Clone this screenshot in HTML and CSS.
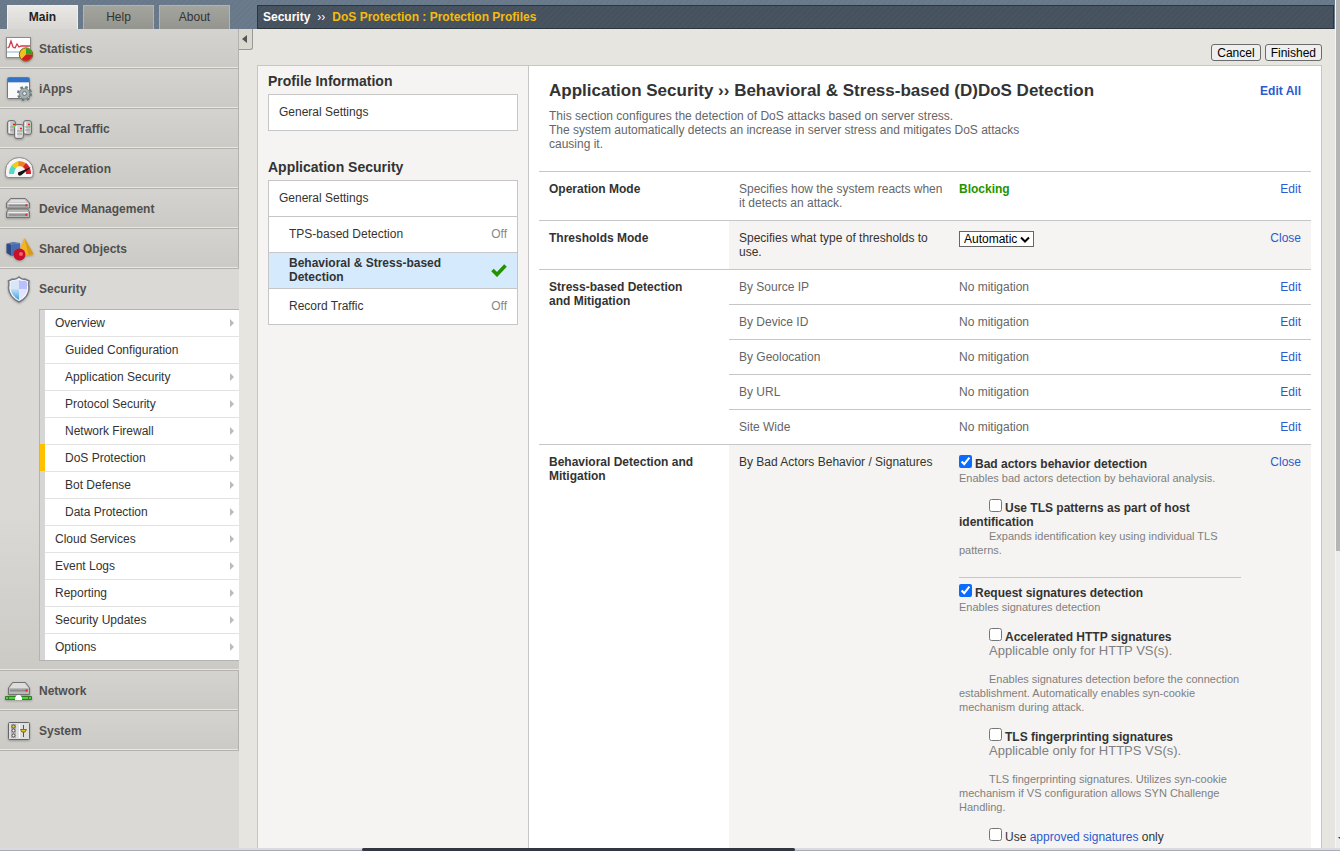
FILE: index.html
```html
<!DOCTYPE html>
<html lang="en">
<head>
<meta charset="utf-8">
<title>DoS Protection : Protection Profiles</title>
<link rel="stylesheet" href="styles.css">
</head>
<body>
<div class="window">
<header class="banner">
  <nav class="tabs" aria-label="Sections">
    <a class="tab tab-active" href="#main">Main</a>
    <a class="tab" href="#help">Help</a>
    <a class="tab" href="#about">About</a>
  </nav>
  <div class="breadcrumb"><span>Security</span><span class="crumb-sep">››</span><span class="crumb-current">DoS Protection : Protection Profiles</span></div>
</header>

<div class="body">
  <nav class="sidebar" aria-label="Main">
    <a class="module" href="#"><svg class="icon" viewBox="0 0 30 30">
      <rect x="1.500" y="3.500" width="24" height="20" fill="#fff" stroke="#8b8b8b"/><path d="M2 17h23v2H2z" fill="#bdd9ee"/><path d="M2.500 14l1.500-1 2-6 2 6 2 1 2-4 2 3 2-1h9" fill="none" stroke="#d33b45" stroke-width="1.300"/>
      <circle cx="21" cy="20.500" r="6.700" fill="#f0c020" stroke="#75601c"/><path d="M21 20.500v-6.200a6.200 6.200 0 0 1 6.200 6.200z" fill="#28a428"/><path d="M21 20.500h6.200a6.200 6.200 0 0 1-10.600 4.400z" fill="#d0182c"/></svg>Statistics</a>
    <a class="module" href="#"><svg class="icon" viewBox="0 0 30 30">
      <rect x="2.500" y="3.500" width="22" height="21" rx="1" fill="#f8fafc" stroke="#777"/><path d="M3 4h21v4H3z" fill="#2f74c8"/>
      <path d="M3 8.500h21" stroke="#b8cbe0"/><circle cx="19.500" cy="19.500" r="6.300" fill="none" stroke="#6d787a" stroke-width="2.400" stroke-dasharray="2.500 2.450"/><circle cx="19.500" cy="19.500" r="5.300" fill="#a4b1b3" stroke="#7d898b"/><circle cx="19.500" cy="19.500" r="2" fill="#dce2e2" stroke="#6d787a"/></svg>iApps</a>
    <a class="module" href="#"><svg class="icon" viewBox="0 0 30 30">
      <g fill="#c4c4c4" stroke="#727272"><rect x="2.500" y="6.500" width="8" height="14" rx="2.500"/><rect x="18.500" y="6.500" width="8" height="14" rx="2.500"/><rect x="9.500" y="10.500" width="9" height="14" rx="2.500" fill="#d5d5d5"/></g>
      <path d="M4.500 8v11M20.500 8v11M11.500 12v11" stroke="#f2f2f2" stroke-width="1.500"/><path d="M5 13h5M5 16h4M20 13h5M20 16h5M12 17h5M12 20h5" stroke="#999"/><path d="M8 10.500h2M23 10.500h2M15 14.500h2" stroke="#e2202b" stroke-width="1.600"/><path d="M8.500 12.500h1.500M24 12.500h1.500M16 16.500h1.500" stroke="#63dc32" stroke-width="1.600"/></svg>Local Traffic</a>
    <a class="module" href="#"><svg class="icon" viewBox="0 0 30 30">
      <path d="M.5 20.500v-4a13.800 13 0 0 1 27.600 0v4q0 3-3 3H3.500q-3 0-3-3z" fill="#f5f5f5" stroke="#898989"/>
      <g fill="none" stroke-width="5"><path d="M6.500 20q0-5 3-8" stroke="#57d8c4"/><path d="M8.500 13q2.500-3 6-3.500" stroke="#f0cb20"/><path d="M13.500 9.500q4 0 6.500 2" stroke="#f08020"/><path d="M19.500 11q4 3 4 9" stroke="#d81f2b"/></g><path d="M13 18.500L26 13l-9.500 8q-2.500 1.500-3.500-.5z" fill="#111"/></svg>Acceleration</a>
    <a class="module" href="#"><svg class="icon" viewBox="0 0 30 30">
      <path d="M1.500 9l4-4.500h15l4 4.500v5h-23z" fill="#b7b7b7" stroke="#747474"/><path d="M1.500 18l2-3h19l2 3v5.500h-23z" fill="#b7b7b7" stroke="#747474"/><path d="M3.500 8.500l3-3h13l3 3z" fill="#dedede"/><path d="M3 9.500h20M3 18.500h20" stroke="#eee"/><path d="M4 11.500h18M4 21h18" stroke="#8c8c8c" stroke-width="1.500"/><path d="M20.500 11.200h2M20.500 20.700h2" stroke="#e22731" stroke-width="2"/></svg>Device Management</a>
    <a class="module" href="#"><svg class="icon" viewBox="0 0 30 30">
      <path d="M1.500 9.500l5 1v11.500l-5-3z" fill="#2e4a86"/><path d="M6.500 10.500l8.500-1.500v11l-8.500 2z" fill="#486daf"/><path d="M1.500 9.500l7-1.500 6.500 1-8.500 1.500z" fill="#5979b5"/><path d="M19.500 4L13 20q7 3 15.500 0z" fill="#f2b324"/><path d="M19.500 4l4 17q3 0 5-1z" fill="#d9991a"/><circle cx="14.500" cy="20.500" r="6" fill="#ca1029"/><circle cx="16" cy="20" r="2" fill="#f46070"/></svg>Shared Objects</a>
    <section class="module-open">
      <a class="module module-current" href="#"><svg class="icon" viewBox="0 0 30 30">
        <defs><linearGradient id="shield" x1="0" y1="0" x2="0" y2="1"><stop offset="0" stop-color="#c4e2fa"/><stop offset="1" stop-color="#409fd8"/></linearGradient></defs>
        <path d="M14 3q3 3 6 2l4 2q-1 3 0 7 0 9-10 14Q4 23 3.500 14q1-4 0-7l4-2q3.500 1 6.500-2z" fill="#f7faff" stroke="#757982" stroke-width="1.500"/><path d="M14 6v9H5.500q0-4 0-7l3-1.500q3 0 5.500-.5z" fill="#d9e6f6"/><path d="M5.500 15H14v11q-7.500-4-8.500-11z" fill="url(#shield)"/><path d="M14 6q3 1.500 6 .5l2 1.500v7h-8z" fill="#b9c0fb"/><path d="M14 15h8.500q-1.500 7-8.500 11z" fill="#e2e4ff"/></svg>Security</a>
      <ul class="submenu">
        <li><a href="#">Overview</a></li>
        <li class="nested plain"><a href="#">Guided Configuration</a></li>
        <li class="nested"><a href="#">Application Security</a></li>
        <li class="nested"><a href="#">Protocol Security</a></li>
        <li class="nested"><a href="#">Network Firewall</a></li>
        <li class="nested selected"><a href="#">DoS Protection</a></li>
        <li class="nested"><a href="#">Bot Defense</a></li>
        <li class="nested"><a href="#">Data Protection</a></li>
        <li><a href="#">Cloud Services</a></li>
        <li><a href="#">Event Logs</a></li>
        <li><a href="#">Reporting</a></li>
        <li><a href="#">Security Updates</a></li>
        <li><a href="#">Options</a></li>
      </ul>
    </section>
    <a class="module" href="#"><svg class="icon" viewBox="0 0 30 30">
      <path d="M3.500 12l4-5.500h13l4 5.500v6.500h-21z" fill="#b9b9b9" stroke="#737373"/><path d="M4.500 12l4-5h11l4 5z" fill="#ddd"/><path d="M5 14.500h18" stroke="#8c8c8c" stroke-width="2"/><path d="M20.500 14.500h2" stroke="#e22731" stroke-width="2"/><path d="M.5 20.500h26v3H.5z" fill="#4bd436" stroke="#337a29"/><path d="M10 24v-2.500l2-2.500h3l2 2.500V24z" fill="#fff"/><path d="M3.500 20v4M23.500 20v4" stroke="#337a29"/></svg>Network</a>
    <a class="module" href="#"><svg class="icon" viewBox="0 0 30 30">
      <rect x="3.500" y="6.500" width="21" height="17" rx="1" fill="#dedede" stroke="#666"/><path d="M14.500 8v14" stroke="#fff"/><path d="M6 8h5v14H6z" fill="#b4b4b4"/><g fill="#eee" stroke="#555"><circle cx="8.500" cy="14.500" r="1.500"/><circle cx="8.500" cy="19.500" r="1.500"/><circle cx="8.500" cy="10.500" r="1.700" fill="#e5c72c"/></g><path d="M18.500 9v12" stroke="#555"/><path d="M15.500 13.500h6l-1.500 2.500h-3z" fill="#e3c81e" stroke="#806e18"/></svg>System</a>
  </nav>

  <main class="main">
    <button class="collapse" type="button" aria-label="Collapse menu"></button>
    <div class="actions"><button type="button">Cancel</button><button type="button">Finished</button></div>
    <div class="panel">
      <aside class="profile-nav">
        <h2>Profile Information</h2>
        <ul class="nav-box"><li><a href="#">General Settings</a></li></ul>
        <h2>Application Security</h2>
        <ul class="nav-box">
          <li><a href="#">General Settings</a></li>
          <li class="child"><a href="#">TPS-based Detection</a><span>Off</span></li>
          <li class="child active"><a href="#">Behavioral &amp; Stress-based Detection</a><svg class="check" viewBox="0 0 16 14" role="img" aria-label="On"><path d="M1.500 7l4.500 4.500L14.500 2.500" fill="none" stroke="#259300" stroke-width="3.600"/></svg></li>
          <li class="child"><a href="#">Record Traffic</a><span>Off</span></li>
        </ul>
      </aside>
      <section class="details">
        <div class="title-row"><h1>Application Security ›› Behavioral &amp; Stress-based (D)DoS Detection</h1><a class="edit-all" href="#">Edit All</a></div>
        <p class="intro">This section configures the detection of DoS attacks based on server stress.<br>The system automatically detects an increase in server stress and mitigates DoS attacks causing it.</p>
        <table class="settings">
          <colgroup><col class="col-name"><col class="col-about"><col class="col-value"><col class="col-action"></colgroup>
          <tbody>
          <tr><th scope="row">Operation Mode</th><td>Specifies how the system reacts when it detects an attack.</td><td><strong class="blocking">Blocking</strong></td><td class="action"><a href="#">Edit</a></td></tr>
          <tr class="editing"><th scope="row">Thresholds Mode</th><td><label for="thresholds">Specifies what type of thresholds to use.</label></td><td><span class="select-wrap"><select id="thresholds"><option>Automatic</option><option>Manual</option></select><svg class="caret" viewBox="0 0 10 7" aria-hidden="true"><path d="M1 1.500l4 4 4-4" fill="none" stroke="#000" stroke-width="2"/></svg></span></td><td class="action"><a href="#">Close</a></td></tr>
          <tr><th scope="rowgroup" rowspan="5">Stress-based Detection and Mitigation</th><td>By Source IP</td><td>No mitigation</td><td class="action"><a href="#">Edit</a></td></tr>
          <tr><td>By Device ID</td><td>No mitigation</td><td class="action"><a href="#">Edit</a></td></tr>
          <tr><td>By Geolocation</td><td>No mitigation</td><td class="action"><a href="#">Edit</a></td></tr>
          <tr><td>By URL</td><td>No mitigation</td><td class="action"><a href="#">Edit</a></td></tr>
          <tr><td>Site Wide</td><td>No mitigation</td><td class="action"><a href="#">Edit</a></td></tr>
          <tr class="editing"><th scope="row">Behavioral Detection and Mitigation</th><td>By Bad Actors Behavior / Signatures</td>
            <td>
              <div class="option"><input type="checkbox" id="bad-actors" checked><label for="bad-actors">Bad actors behavior detection</label><p>Enables bad actors detection by behavioral analysis.</p></div>
              <div class="option sub"><input type="checkbox" id="tls-patterns"><label for="tls-patterns">Use TLS patterns as part of host identification</label><p>Expands identification key using individual TLS patterns.</p></div>
              <hr>
              <div class="option"><input type="checkbox" id="request-sig" checked><label for="request-sig">Request signatures detection</label><p>Enables signatures detection</p></div>
              <div class="option sub"><input type="checkbox" id="http-sig"><label for="http-sig">Accelerated HTTP signatures</label><p class="scope">Applicable only for HTTP VS(s).</p><p>Enables signatures detection before the connection establishment. Automatically enables syn-cookie mechanism during attack.</p></div>
              <div class="option sub"><input type="checkbox" id="tls-sig"><label for="tls-sig">TLS fingerprinting signatures</label><p class="scope">Applicable only for HTTPS VS(s).</p><p>TLS fingerprinting signatures. Utilizes syn-cookie mechanism if VS configuration allows SYN Challenge Handling.</p></div>
              <div class="option sub light"><input type="checkbox" id="approved"><label for="approved">Use <a href="#">approved signatures</a> only</label></div>
            </td><td class="action"><a href="#">Close</a></td></tr>
          </tbody>
        </table>
      </section>
    </div>
  </main>
</div>
</div>
<div class="vscroll" aria-hidden="true"><span></span><i></i></div>
<div class="hscroll" aria-hidden="true"><span></span></div>
</body>
</html>
```
FILE: styles.css
```css
* { box-sizing: border-box; }
body {
  margin: 0;
  height: 100vh;
  overflow: hidden;
  display: grid;
  grid-template: minmax(0, 1fr) 3px / minmax(0, 1fr) 5px;
  background: #e6e5e0;
  color: #333;
  font: 12px/14px "Liberation Sans", Arial, sans-serif;
}
a { color: #2a5bd0; text-decoration: none; }
h1, h2, p, ul { margin: 0; padding: 0; }
ul { list-style: none; }

.window { display: flex; flex-direction: column; overflow: hidden; }

/* banner */
.banner {
  flex: none;
  display: flex;
  height: 29px;
  padding: 5px 1px 0 7px;
  background: repeating-linear-gradient(135deg, #6b7b8c 0 2px, #66788a 2px 4px);
}
.tabs { display: flex; gap: 5px; width: 250px; flex: none; }
.tab {
  width: 71px;
  border: 1px solid #b3b4b0;
  border-bottom: 0;
  background: linear-gradient(#a3a49e, #94958f);
  color: #333;
  text-align: center;
  line-height: 23px;
}
.tab-active { border-color: #efefed; background: linear-gradient(#e9e8e5, #d8d7d3); font-weight: bold; color: #222; }
.breadcrumb {
  flex: 1;
  display: flex;
  gap: 7px;
  padding-left: 5px;
  border: 1px solid #2d353d;
  background: repeating-linear-gradient(135deg, #48545f 0 2px, #45515c 2px 4px);
  color: #fff;
  font-weight: bold;
  line-height: 22px;
}
.crumb-sep { font-weight: normal; }
.crumb-current { color: #f5bc0a; }

.body { flex: 1; display: flex; min-height: 0; }

/* module menu */
.sidebar { flex: none; width: 239px; background: #dad9d5; }
.module {
  display: flex;
  align-items: center;
  gap: 4px;
  height: 40px;
  padding-left: 5px;
  border-right: 1px solid #b3b2af;
  border-bottom: 1px solid #b3b2af;
  background: linear-gradient(#d4d3cf, #cbcac5);
  box-shadow: inset 0 -1px #e8e7e4;
  color: #505050;
  font-weight: bold;
}
.icon { width: 30px; height: 30px; flex: none; filter: drop-shadow(0 1px 1px #0004); }
.module-open {
  padding-bottom: 9px;
  border-bottom: 1px solid #b3b2af;
  background: linear-gradient(#dad9d5 60%, #cbcac5);
  box-shadow: inset 0 -1px #e8e7e4;
}
.module-current { border-color: transparent; background: none; box-shadow: none; }
.submenu {
  margin-left: 39px;
  border: 1px solid #b3b3b3;
  border-right: 0;
  background: #fff;
}
.submenu li { border-left: 5px solid #d6d6d6; }
.submenu a {
  display: flex;
  justify-content: space-between;
  align-items: center;
  height: 26px;
  padding: 0 5px 0 10px;
  color: #333;
}
.submenu li + li a { height: 27px; border-top: 1px solid #e3e3e3; }
.submenu a::after { content: ""; border: solid transparent; border-width: 4px 0 4px 4px; border-left-color: #bbb; }
.submenu .plain a::after { display: none; }
.submenu .nested a { padding-left: 20px; }
.submenu .selected { border-left-color: #ffc000; }

/* content */
.main { flex: 1; min-width: 0; position: relative; display: flex; flex-direction: column; padding: 15px 13px 0 18px; }
.collapse {
  position: absolute;
  left: 0;
  top: 0;
  width: 14px;
  height: 21px;
  padding: 0 0 0 3px;
  border: 1px solid #999;
  border-width: 0 1px 1px 0;
  border-radius: 0 0 3px 0;
  background: #dad9d0;
}
.collapse::before { content: ""; display: block; width: 0; border: solid transparent; border-width: 4px 5px 4px 0; border-right-color: #555; }
.actions { display: flex; justify-content: flex-end; gap: 4px; margin-bottom: 4px; }
.actions button {
  height: 17px;
  padding: 0 5px;
  border: 1px solid #6b6b6b;
  border-radius: 3px;
  background: #efefef;
  color: #000;
  font: inherit;
}
.panel { flex: 1; min-height: 0; display: flex; border: 1px solid #c6c6c6; border-bottom: 0; background: #fff; overflow: hidden; }

.profile-nav { flex: none; width: 271px; padding: 7px 10px; border-right: 1px solid #c6c6c6; background: #f5f4f2; }
.profile-nav h2 { margin-bottom: 5px; font-size: 14px; line-height: 16px; }
.nav-box { margin-bottom: 28px; border: 1px solid #c6c6c6; background: #fff; }
.nav-box li { display: flex; align-items: center; justify-content: space-between; height: 35px; padding: 0 10px 2px; color: #888; }
.nav-box li + li { height: 36px; border-top: 1px solid #c6c6c6; }
.nav-box a { color: #333; }
.nav-box .child { padding-left: 20px; }
.nav-box .child a { max-width: 180px; }
.nav-box .active { background: #d5ebfd; }
.nav-box .active a { font-weight: bold; }
.check { width: 16px; height: 14px; }

.details { flex: 1; min-width: 0; padding: 15px 10px 0; }
.title-row { display: flex; justify-content: space-between; align-items: center; padding: 0 10px; }
h1 { font-size: 17px; line-height: 20px; }
.edit-all { font-weight: bold; }
.intro { max-width: 480px; margin: 8px 10px 20px; color: #666; }
.settings { width: 100%; table-layout: fixed; border-spacing: 0; }
.col-name { width: 190px; }
.col-about { width: 220px; }
.col-action { width: 60px; }
.settings th, .settings td { padding: 10px; border-top: 1px solid #c6c6c6; text-align: left; vertical-align: top; color: #666; }
.settings th { padding-right: 30px; color: #333; }
.settings th + td { padding-right: 4px; }
.settings .editing td { background: #f5f4f2; color: #333; }
.settings .action { text-align: right; }
.blocking { color: #259300; }

.select-wrap { display: inline-block; position: relative; height: 16px; }
.select-wrap select {
  appearance: none;
  width: 75px;
  height: 16px;
  padding: 0 0 0 4px;
  border: 1px solid #666;
  border-radius: 0;
  background: #fff;
  color: #000;
  font: inherit;
  line-height: 14px;
  display: block;
}
.caret { position: absolute; right: 4px; top: 5px; width: 10px; height: 7px; pointer-events: none; }

.option { margin-bottom: 14px; }
.option input { width: 13px; height: 13px; margin: 0 3px 0 0; accent-color: #0a6cff; }
.option label { font-weight: bold; }
.option p { color: #808080; font-size: 11px; }
.option .scope { margin-bottom: 14px; font-size: 13px; }
.sub { text-indent: 30px; }
.sub input { text-indent: 0; }
.option.light label { font-weight: normal; }
hr { margin: 20px 0 6px; border: 0; border-top: 1px solid #c6c6c6; }

/* window scroll bars */
.vscroll { display: flex; flex-direction: column; justify-content: space-between; background: #ececec; border-left: 1px solid #f6f6f6; }
.vscroll span { height: 65%; background: #b5b5b5; }
.vscroll i { border: solid transparent; border-width: 3px 0 0 3px; border-top-color: #333; margin: 0 0 8px 2px; }
.hscroll { grid-column: 1 / -1; background: #d9dbe3; border-bottom: 1px solid #aaabb5; }
.hscroll span { display: block; width: 433px; height: 3px; margin-left: 27%; background: #333640; border-radius: 2px; }
```
